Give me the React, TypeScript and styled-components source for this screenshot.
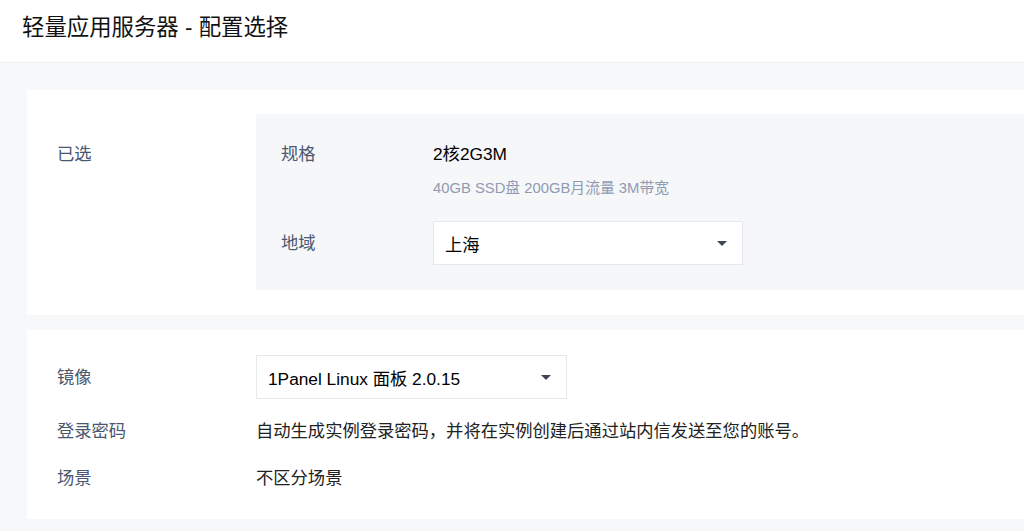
import React from "react";
import styled, { createGlobalStyle } from "styled-components";

const Global = createGlobalStyle`
  html, body { margin: 0; padding: 0; }
  body {
    background: #f7f8fa;
    font-family: "Liberation Sans", "Noto Sans CJK SC", sans-serif;
    color: #000;
    overflow: hidden;
  }
`;

const Page = styled.div`
  width: 1024px;
  min-height: 531px;
  background: #f7f8fa;
`;

const Header = styled.header`
  height: 63px;
  background: #fff;
  border-bottom: 1px solid #eef0f3;
  box-sizing: border-box;
  display: flex;
  align-items: center;
  padding: 0 0 6px 22px;
`;

const Title = styled.h1`
  margin: 0;
  font-size: 22.4px;
  font-weight: 400;
  color: #111;
  line-height: 30px;
`;

const Main = styled.main`
  padding: 27px 0 12px 27px;
  display: flex;
  flex-direction: column;
  gap: 15px;
`;

const Card = styled.section<{ $pt: number; $pb: number }>`
  background: #fff;
  padding: ${(p) => p.$pt}px 0 ${(p) => p.$pb}px 30px;
`;

const SelectedRow = styled.div`
  display: grid;
  grid-template-columns: 199px 1fr;
`;

const Label = styled.div<{ $top?: number }>`
  font-size: 17.3px;
  line-height: 24px;
  color: #495770;
  padding-top: ${(p) => p.$top ?? 0}px;
`;

const Panel = styled.div`
  background: #f6f7f9;
  padding: 26px 25px 25px;
  display: grid;
  grid-template-columns: 152px 1fr;
`;

const SpecBlock = styled.div`
  display: flex;
  flex-direction: column;
  padding-top: 2px;
`;

const SpecValue = styled.div`
  font-size: 17.3px;
  line-height: 24px;
  color: #000;
`;

const SpecSub = styled.div`
  margin-top: 12px;
  font-size: 14.8px;
  line-height: 20px;
  color: #8f9bb3;
  margin-bottom: 23px;
`;

const SelectBox = styled.div<{ $w: number }>`
  width: ${(p) => p.$w}px;
  height: 44px;
  box-sizing: border-box;
  background: #fff;
  border: 1px solid #e6e8ec;
  display: flex;
  align-items: center;
  justify-content: space-between;
  padding: 0 15px 0 11px;
  font-size: 17.3px;
  color: #000;
`;

const Caret = styled.span`
  width: 0;
  height: 0;
  border-left: 5px solid transparent;
  border-right: 5px solid transparent;
  border-top: 5px solid #3e4656;
  margin-top: 1px;
`;

const FormGrid = styled.div`
  display: grid;
  grid-template-columns: 199px 1fr;
  align-items: center;
`;

const Value = styled.div<{ $mt: number }>`
  font-size: 17.3px;
  line-height: 24px;
  color: #222;
  margin-top: ${(p) => p.$mt}px;
`;

const RowLabel = styled(Label)<{ $mt: number }>`
  margin-top: ${(p) => p.$mt}px;
`;

export default function App() {
  return (
    <>
      <Global />
      <Page>
        <Header>
          <Title>轻量应用服务器 - 配置选择</Title>
        </Header>
        <Main>
          <Card $pt={24} $pb={25}>
            <SelectedRow>
              <Label $top={28}>已选</Label>
              <Panel>
                <Label $top={2}>规格</Label>
                <SpecBlock>
                  <SpecValue>2核2G3M</SpecValue>
                  <SpecSub>40GB SSD盘 200GB月流量 3M带宽</SpecSub>
                </SpecBlock>
                <Label $top={10}>地域</Label>
                <SelectBox $w={310}>
                  <span>上海</span>
                  <Caret />
                </SelectBox>
              </Panel>
            </SelectedRow>
          </Card>
          <Card $pt={25} $pb={29}>
            <FormGrid>
              <RowLabel $mt={0}>镜像</RowLabel>
              <SelectBox $w={311}>
                <span>1Panel Linux 面板 2.0.15</span>
                <Caret />
              </SelectBox>
              <RowLabel $mt={20}>登录密码</RowLabel>
              <Value $mt={20}>自动生成实例登录密码，并将在实例创建后通过站内信发送至您的账号。</Value>
              <RowLabel $mt={23}>场景</RowLabel>
              <Value $mt={23}>不区分场景</Value>
            </FormGrid>
          </Card>
        </Main>
      </Page>
    </>
  );
}
